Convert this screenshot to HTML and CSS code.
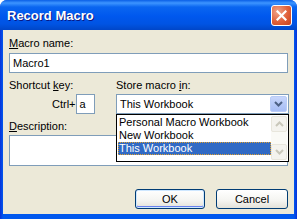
FILE: index.html
```html
<!DOCTYPE html>
<html lang="en">
<head>
    <meta charset="UTF-8">
    <title>Record Macro</title>
    <link rel="stylesheet" href="styles.css">
</head>
<body>
    <div class="window">
        <div class="titlebar">
            <span class="title">Record Macro</span>
            <button class="close" type="button">
                <svg width="11" height="11" viewBox="0 0 11 11"><path d="M1.5 1.5 L9.5 9.5 M9.5 1.5 L1.5 9.5" stroke="#fff" stroke-width="2.2" stroke-linecap="square"/></svg>
            </button>
        </div>
        <div class="content">
            <div class="label"><u>M</u>acro name:</div>
            <div class="field name-field">Macro1</div>

            <div class="row">
                <div class="shortcut">
                    <div class="label">Shortcut <u>k</u>ey:</div>
                    <div class="ctrl-row">
                        <span>Ctrl+</span>
                        <div class="field key">a</div>
                    </div>
                </div>
                <div class="store">
                    <div class="label">Store macro <u>i</u>n:</div>
                    <div class="combo">
                        <span>This Workbook</span>
                        <span class="drop-btn">
                            <svg width="9" height="6" viewBox="0 0 9 6"><path d="M1 1 L4.5 4.5 L8 1" fill="none" stroke="#4d6185" stroke-width="2"/></svg>
                        </span>
                        <div class="list">
                            <div class="item">Personal Macro Workbook</div>
                            <div class="item">New Workbook</div>
                            <div class="item selected">This Workbook</div>
                            <div class="scroll">
                                <span class="sbtn"><svg width="9" height="6" viewBox="0 0 9 6"><path d="M1 5 L4.5 1.5 L8 5" fill="none" stroke="#c9c7ba" stroke-width="2"/></svg></span>
                                <span class="sbtn"><svg width="9" height="6" viewBox="0 0 9 6"><path d="M1 1 L4.5 4.5 L8 1" fill="none" stroke="#c9c7ba" stroke-width="2"/></svg></span>
                            </div>
                        </div>
                    </div>
                </div>
            </div>

            <div class="label desc-label"><u>D</u>escription:</div>
            <div class="field desc"></div>

            <div class="buttons">
                <button class="btn default" type="button">OK</button>
                <button class="btn cancel" type="button">Cancel</button>
            </div>
        </div>
    </div>
</body>
</html>
```

FILE: styles.css
```css
body {
    margin: 0;
    padding: 0;
    font-family: "Liberation Sans", Arial, sans-serif;
    font-size: 11px;
    color: #000;
}

.window {
    width: 297px;
    height: 219px;
    box-sizing: border-box;
    background: linear-gradient(to right, #0831d9, #0058ee 3px, #0058ee 294px, #0831d9);
    display: flex;
    flex-direction: column;
    border-radius: 7px 7px 0 0;
    overflow: hidden;
}

.titlebar {
    height: 30px;
    display: flex;
    align-items: center;
    justify-content: space-between;
    padding: 0 5px 0 7px;
    background: linear-gradient(to bottom, #0a5fe6 0, #3d95ff 3px, #0a66f0 7px, #0058ee 16px, #0054e3 24px, #0046c8 30px);
    flex-shrink: 0;
}

.title {
    color: #fff;
    font-weight: bold;
    font-size: 13px;
    text-shadow: 1px 1px 0 #0a1883;
    margin-top: 1px;
}

.close {
    width: 21px;
    height: 21px;
    padding: 0;
    border: 1px solid #fff;
    border-radius: 3px;
    background: radial-gradient(circle at 30% 30%, #f0a48a, #e0603a 55%, #c6411d);
    display: flex;
    align-items: center;
    justify-content: center;
    margin-top: 1px;
}

.content {
    flex: 1;
    margin: 0 3px 5px 3px;
    background: #ece9d8;
    padding: 7px 6px 0 6px;
    display: flex;
    flex-direction: column;
}

.label {
    height: 13px;
    line-height: 13px;
}

.field {
    background: #fff;
    border: 1px solid #7f9db9;
    box-sizing: border-box;
}

.name-field {
    height: 20px;
    margin-top: 3px;
    line-height: 18px;
    padding-left: 3px;
}

.row {
    display: flex;
    margin-top: 6px;
}

.shortcut {
    width: 107px;
}

.ctrl-row {
    display: flex;
    align-items: center;
    padding-left: 43px;
    margin-top: 2px;
}

.key {
    width: 19px;
    height: 20px;
    line-height: 18px;
    padding-left: 3px;
}

.store {
    flex: 1;
    margin-right: -1px;
}

.combo {
    position: relative;
    margin-top: 2px;
    height: 20px;
    border: 1px solid #7f9db9;
    background: #fff;
    box-sizing: border-box;
    display: flex;
    align-items: center;
    justify-content: space-between;
    padding: 0 1px 0 3px;
}

.drop-btn {
    width: 17px;
    height: 16px;
    border-radius: 2px;
    background: linear-gradient(to bottom, #c8d6fb, #b6c9f7 50%, #a7bdf5);
    border: 1px solid #b9ccf7;
    box-sizing: border-box;
    display: flex;
    align-items: center;
    justify-content: center;
}

.list {
    position: absolute;
    left: -1px;
    right: -1px;
    top: 19px;
    height: 48px;
    box-sizing: border-box;
    border: 1px solid #000;
    background: #fff;
    padding: 1px 17px 0 1px;
}

.item {
    height: 13px;
    line-height: 13px;
    padding-left: 1px;
}

.item.selected {
    background: #316ac5;
    color: #fff;
    outline: 1px dotted #e0a030;
    outline-offset: -1px;
}

.scroll {
    position: absolute;
    top: 1px;
    right: 1px;
    bottom: 1px;
    width: 16px;
    background: #fafaf6;
    display: flex;
    flex-direction: column;
    justify-content: space-between;
}

.sbtn {
    height: 16px;
    border: 1px solid #e8e6dc;
    border-radius: 2px;
    background: #f4f3ee;
    box-sizing: border-box;
    display: flex;
    align-items: center;
    justify-content: center;
}

.desc-label {
    margin-top: 6px;
}

.desc {
    height: 31px;
    margin-top: 2px;
}

.buttons {
    display: flex;
    justify-content: flex-end;
    gap: 11px;
    margin-top: 23px;
}

.btn {
    height: 20px;
    width: 70px;
    font-family: "Liberation Sans", Arial, sans-serif;
    font-size: 11px;
    border: 1px solid #003c74;
    border-radius: 3px;
    background: linear-gradient(to bottom, #ffffff, #f4f4f0 60%, #e3e2d9);
    padding: 0;
}

.btn.default {
    box-shadow: inset 0 0 0 1px #cee7ff, inset 0 -1px 0 1px #6982ee;
}

.cancel {
    width: 72px;
}
```
